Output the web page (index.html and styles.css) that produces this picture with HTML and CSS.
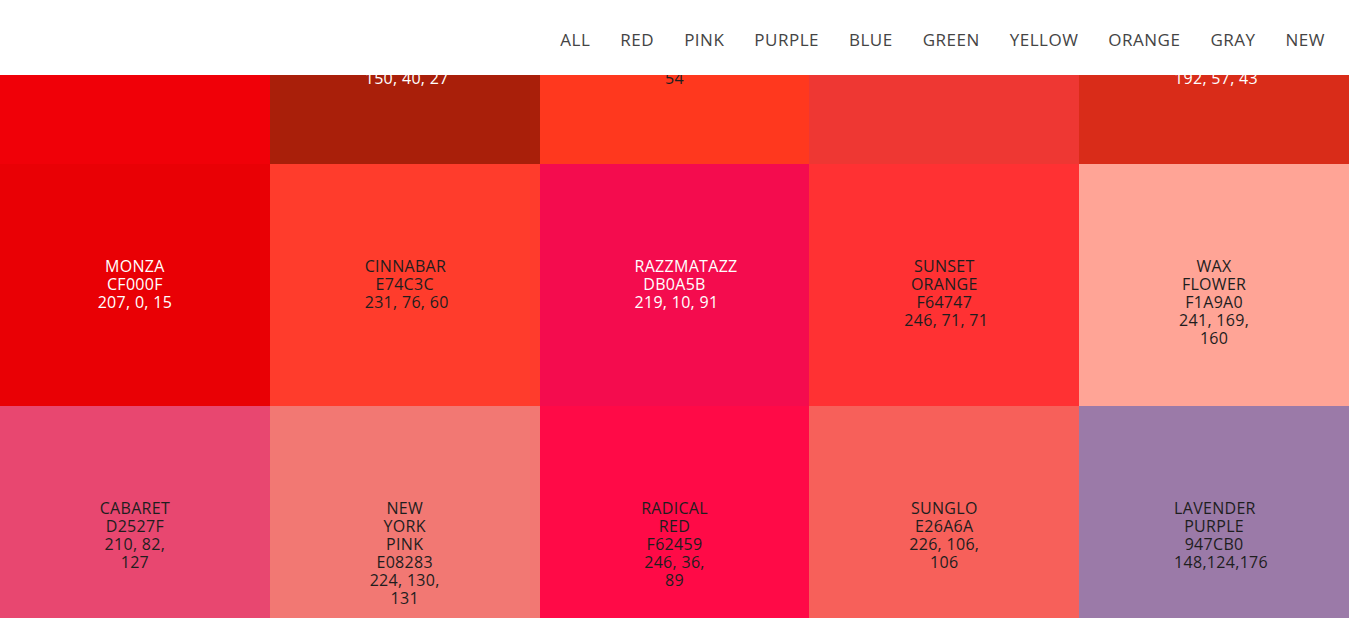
FILE: index.html
```html
<!DOCTYPE html>
<html lang="en">
<head>
<meta charset="utf-8">
<title>Flat Colors</title>
<link rel="stylesheet" href="styles.css">
</head>
<body>
<header class="topbar">
  <nav class="nav">
    <a class="nav-link" href="#">ALL</a>
    <a class="nav-link" href="#">RED</a>
    <a class="nav-link" href="#">PINK</a>
    <a class="nav-link" href="#">PURPLE</a>
    <a class="nav-link" href="#">BLUE</a>
    <a class="nav-link" href="#">GREEN</a>
    <a class="nav-link" href="#">YELLOW</a>
    <a class="nav-link" href="#">ORANGE</a>
    <a class="nav-link" href="#">GRAY</a>
    <a class="nav-link" href="#">NEW</a>
  </nav>
</header>
<main class="grid">
  <div class="tile c-ruby light"><div class="info">RUBY<br>F00008<br>240, 0, 8</div></div>
  <div class="tile c-oldbrick light"><div class="info">OLD<br>BRICK<br>96281B<br>150, 40, 27</div></div>
  <div class="tile c-flamingo dark"><div class="info">FLAMINGO<br>EF4836<br>239, 72,<br>54</div></div>
  <div class="tile c-valencia light"><div class="info">VALENCIA<br>D24D57<br>210, 77, 87</div></div>
  <div class="tile c-tallpoppy light"><div class="info">TALL<br>POPPY<br>C0392B<br>192, 57, 43</div></div>

  <div class="tile c-monza light"><div class="info">MONZA<br>CF000F<br>207, 0, 15</div></div>
  <div class="tile c-cinnabar dark"><div class="info">CINNABAR<br>E74C3C<br>231, 76, 60</div></div>
  <div class="tile c-razz light"><div class="info">RAZZMATAZZ<br>DB0A5B<br>219, 10, 91</div></div>
  <div class="tile c-sunset dark"><div class="info">SUNSET<br>ORANGE<br>F64747<br>246, 71, 71</div></div>
  <div class="tile c-wax dark"><div class="info">WAX<br>FLOWER<br>F1A9A0<br>241, 169,<br>160</div></div>

  <div class="tile c-cabaret dark"><div class="info">CABARET<br>D2527F<br>210, 82,<br>127</div></div>
  <div class="tile c-nypink dark"><div class="info">NEW<br>YORK<br>PINK<br>E08283<br>224, 130,<br>131</div></div>
  <div class="tile c-radical dark"><div class="info">RADICAL<br>RED<br>F62459<br>246, 36,<br>89</div></div>
  <div class="tile c-sunglo dark"><div class="info">SUNGLO<br>E26A6A<br>226, 106,<br>106</div></div>
  <div class="tile c-lavender dark"><div class="info">LAVENDER<br>PURPLE<br>947CB0<br>148,124,176</div></div>
</main>
</body>
</html>
```
FILE: styles.css
```css
html, body {
  margin: 0;
  padding: 0;
}
body {
  font-family: "Open Sans", "Liberation Sans", sans-serif;
  background: #ffffff;
  overflow: hidden;
}
.topbar {
  position: fixed;
  top: 0;
  left: 0;
  right: 0;
  height: 75px;
  background: #ffffff;
  z-index: 10;
  display: flex;
  justify-content: flex-end;
  align-items: center;
  box-sizing: border-box;
  padding: 4px 24px 0 0;
}
.nav {
  display: flex;
  gap: 30px;
}
.nav-link {
  color: #444444;
  text-decoration: none;
  font-size: 17px;
  font-weight: 400;
  letter-spacing: 0.5px;
}
.grid {
  display: grid;
  grid-template-columns: repeat(5, 1fr);
  grid-auto-rows: 242px;
  margin-top: -78px;
}
.tile {
  display: flex;
  justify-content: center;
  align-items: flex-start;
  padding-top: 93px;
  box-sizing: border-box;
}
.info {
  width: 80px;
  text-align: center;
  white-space: nowrap;
  font-size: 16px;
  line-height: 18px;
  letter-spacing: 0.3px;
}
.light { color: #ffffff; }
.dark { color: #1e1e1e; }

.c-ruby { background: #f00008; }
.c-oldbrick { background: #a91f0a; }
.c-flamingo { background: #ff381e; }
.c-valencia { background: #ee3733; }
.c-tallpoppy { background: #d92c19; }
.c-monza { background: #e90005; }
.c-cinnabar { background: #ff3c2c; }
.c-razz { background: #f40c4e; }
.c-sunset { background: #ff3133; }
.c-wax { background: #ffa496; }
.c-cabaret { background: #e84770; }
.c-nypink { background: #f27873; }
.c-radical { background: #ff0a47; }
.c-sunglo { background: #f7605a; }
.c-lavender { background: #9b7aa8; }
```
